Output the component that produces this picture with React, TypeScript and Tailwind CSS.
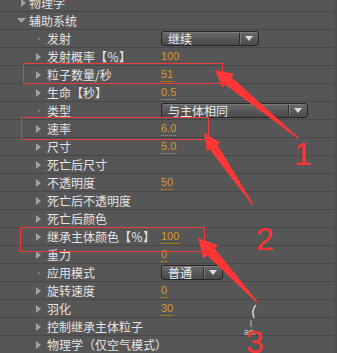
import React from "react";

type Row = {
  label: string;
  level: 1 | 2;
  icon: "right" | "down" | "dot";
  value?: string;
  dotted?: boolean;
  dropdown?: { text: string; w: string };
};

const rows: Row[] = [
  { label: "物理学", level: 1, icon: "right" },
  { label: "辅助系统", level: 1, icon: "down" },
  { label: "发射", level: 2, icon: "dot", dropdown: { text: "继续", w: "w-[98px]" } },
  { label: "发射概率【％】", level: 2, icon: "right", value: "100", dotted: false },
  { label: "粒子数量/秒", level: 2, icon: "right", value: "51", dotted: true },
  { label: "生命【秒】", level: 2, icon: "right", value: "0.5", dotted: true },
  { label: "类型", level: 2, icon: "dot", dropdown: { text: "与主体相同", w: "w-[147px]" } },
  { label: "速率", level: 2, icon: "right", value: "6.0", dotted: true },
  { label: "尺寸", level: 2, icon: "right", value: "5.0", dotted: true },
  { label: "死亡后尺寸", level: 2, icon: "right" },
  { label: "不透明度", level: 2, icon: "right", value: "50", dotted: true },
  { label: "死亡后不透明度", level: 2, icon: "right" },
  { label: "死亡后颜色", level: 2, icon: "right" },
  { label: "继承主体颜色【％】", level: 2, icon: "right", value: "100", dotted: true },
  { label: "重力", level: 2, icon: "right", value: "0", dotted: true },
  { label: "应用模式", level: 2, icon: "dot", dropdown: { text: "普通", w: "w-[62px]" } },
  { label: "旋转速度", level: 2, icon: "right", value: "0", dotted: true },
  { label: "羽化", level: 2, icon: "right", value: "30", dotted: true },
  { label: "控制继承主体粒子", level: 2, icon: "right" },
  { label: "物理学（仅空气模式）", level: 2, icon: "right" },
];

function Icon({ kind }: { kind: Row["icon"] }) {
  if (kind === "right")
    return (
      <svg width="5" height="8" viewBox="0 0 5 8">
        <polygon points="0,0 5,4 0,8" fill="#a2a2a2" />
      </svg>
    );
  if (kind === "down")
    return (
      <svg width="9" height="5" viewBox="0 0 9 5">
        <polygon points="0,0 9,0 4.5,5" fill="#a2a2a2" />
      </svg>
    );
  return <div className="h-[2px] w-[2px] bg-[#7c7c7c]" />;
}

function Dropdown({ text, w }: { text: string; w: string }) {
  const cls =
    "flex h-[15px] shrink-0 items-center rounded-[3px] border border-[#262626] bg-linear-to-b from-[#6a6a6a] to-[#4a4a4a] shadow-[inset_0_1px_0_rgba(255,255,255,0.12)] " +
    w;
  return (
    <div className={cls}>
      <span className="flex-1 pl-[6px] text-[12px] leading-none text-[#ececec]">{text}</span>
      <div className="h-[11px] w-px bg-[#2e2e2e] shadow-[1px_0_0_#7a7a7a]" />
      <div className="flex w-[18px] justify-center">
        <svg width="8" height="5" viewBox="0 0 8 5">
          <polygon points="0,0 8,0 4,5" fill="#dcdcdc" />
        </svg>
      </div>
    </div>
  );
}

function arrow(tx: number, ty: number, ex: number, ey: number, hl: number, hh: number, sh: number) {
  const dx = ex - tx;
  const dy = ey - ty;
  const len = Math.hypot(dx, dy);
  const ux = dx / len;
  const uy = dy / len;
  const px = -uy;
  const py = ux;
  const bx = tx + ux * hl;
  const by = ty + uy * hl;
  const pts = [
    [tx, ty],
    [bx + px * hh, by + py * hh],
    [bx + px * sh, by + py * sh],
    [ex + px * 0.6, ey + py * 0.6],
    [ex - px * 0.6, ey - py * 0.6],
    [bx - px * sh, by - py * sh],
    [bx - px * hh, by - py * hh],
  ];
  return pts.map((p) => p[0].toFixed(1) + "," + p[1].toFixed(1)).join(" ");
}

export default function App() {
  return (
    <div className="relative h-[353px] w-[337px] overflow-hidden bg-[#4e4e4e] font-['Noto_Sans_CJK_SC','Liberation_Sans',sans-serif]">
      <div className="-mt-[6px] w-[335px] bg-[#565656]">
        {rows.map((r, i) => (
          <div key={i} className="flex h-[18px] items-center border-b border-[#474747]">
            <div className="flex w-[161px] shrink-0 items-center">
              {r.level === 1 ? (
                <div className="flex w-[29px] shrink-0 justify-start pl-[17px]">
                  {r.icon === "down" ? (
                    <Icon kind="down" />
                  ) : (
                    <div className="pl-[4px]">
                      <Icon kind={r.icon} />
                    </div>
                  )}
                </div>
              ) : (
                <div className="flex w-[47px] shrink-0 justify-start pl-[36px]">
                  {r.icon === "dot" ? (
                    <div className="pl-[2px]">
                      <Icon kind="dot" />
                    </div>
                  ) : (
                    <Icon kind={r.icon} />
                  )}
                </div>
              )}
              <span className="whitespace-nowrap text-[12px] leading-[17px] text-[#e4e4e4]">{r.label}</span>
            </div>
            {r.value !== undefined && (
              <span
                className={
                  r.dotted
                    ? "mt-[2px] border-b border-dotted border-[#c8942a] pb-[1px] font-['Liberation_Sans',sans-serif] text-[11px] leading-[11px] text-[#d19a2a]"
                    : "mt-[2px] pb-[2px] font-['Liberation_Sans',sans-serif] text-[11px] leading-[11px] text-[#d19a2a]"
                }
              >
                {r.value}
              </span>
            )}
            {r.dropdown && <Dropdown text={r.dropdown.text} w={r.dropdown.w} />}
          </div>
        ))}
      </div>

      {/* annotation rectangles */}
      <div className="absolute left-[23px] top-[63px] h-[21px] w-[200px] border border-[#f03a3a]" />
      <div className="absolute left-[21px] top-[117px] h-[23px] w-[188px] border border-[#f03a3a]" />
      <div className="absolute left-[20px] top-[227px] h-[25px] w-[185px] border border-[#f03a3a]" />

      {/* annotation arrows */}
      <svg className="pointer-events-none absolute left-0 top-0" width="337" height="353" viewBox="0 0 337 353">
        <polygon points={arrow(215, 70, 298, 138, 17, 9, 5)} fill="#ff3636" />
        <polygon points={arrow(204, 133, 253, 205, 17, 8, 4.5)} fill="#ff3636" />
        <polygon points={arrow(198, 238, 257, 302, 19, 10, 5)} fill="#ff3636" />
        <path d="M256 305 Q251 310 254 318" stroke="#d8d8d8" strokeWidth="1.5" fill="none" />
        <path d="M251 320 L251 327" stroke="#bdbdbd" strokeWidth="1" fill="none" />
      </svg>

      <div className="absolute left-[244px] top-[328px] font-['Liberation_Sans',sans-serif] text-[9px] leading-none text-[#cfcfcf]">
        an.
      </div>

      {/* annotation numbers */}
      <div className="absolute left-[294px] top-[138px] font-['Liberation_Sans',sans-serif] text-[32px] leading-[32px] text-[#ff3333]">
        1
      </div>
      <div className="absolute left-[256px] top-[223px] font-['Liberation_Sans',sans-serif] text-[32px] leading-[32px] text-[#ff3333]">
        2
      </div>
      <div className="absolute left-[246px] top-[326px] font-['Liberation_Sans',sans-serif] text-[32px] leading-[32px] text-[#ff3333]">
        3
      </div>
    </div>
  );
}
